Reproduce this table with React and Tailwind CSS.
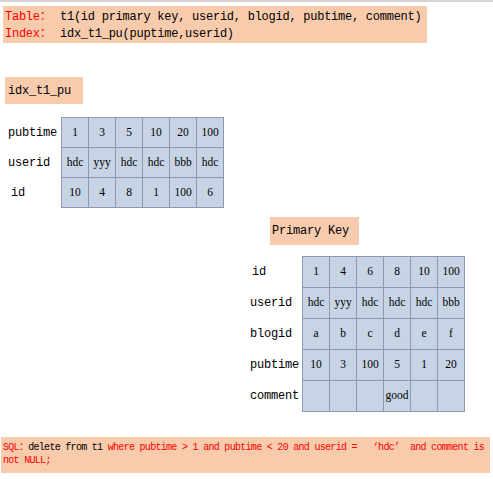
import React from "react";

const mono = { fontFamily: '"Liberation Mono", "Noto Sans CJK SC", monospace' };

function Grid({ rows, labels, labelW, labelPads, cellH }) {
  return (
    <div className="flex">
      <div className="flex flex-col pt-px" style={{ width: labelW }}>
        {labels.map((l, i) => (
          <div
            key={i}
            className={`flex items-center text-[12px] tracking-[-0.2px] text-black ${labelPads[i]} ${cellH}`}
            style={{ ...mono, marginBottom: 1 }}
          >
            {l}
          </div>
        ))}
      </div>
      <div className="grid grid-cols-[repeat(6,26px)] gap-px bg-[#8b9ab0] border border-[#8b9ab0]">
        {rows.flat().map((c, i) => (
          <div
            key={i}
            className={`bg-[#c7d4e5] flex items-center justify-center text-[11.5px] text-black ${cellH}`}
            style={{ fontFamily: '"Liberation Serif", serif' }}
          >
            {c}
          </div>
        ))}
      </div>
    </div>
  );
}

export default function App() {
  return (
    <div className="w-[493px] h-[479px] bg-white border-t-2 border-[#d4d4d4] overflow-hidden" style={mono}>
      <div className="ml-[3px] mt-[4px] w-[424px] h-[37px] bg-[#f8cbad] pl-[2px] pt-[3px] text-[12px] leading-[17px] tracking-[-0.25px] text-black">
        <div className="flex whitespace-nowrap">
          <span className="w-[55px] text-[#ff0000]">Table：</span>
          <span>t1(id primary key, userid, blogid, pubtime, comment)</span>
        </div>
        <div className="flex whitespace-nowrap">
          <span className="w-[55px] text-[#ff0000]">Index：</span>
          <span>idx_t1_pu(puptime,userid)</span>
        </div>
      </div>

      <div className="ml-[5px] mt-[34px] w-[78px] h-[27px] bg-[#f8cbad] flex items-center pl-[3px] text-[12px] tracking-[-0.2px] text-black">
        idx_t1_pu
      </div>

      <div className="mt-[13px]">
        <Grid
          labelW={61}
          labels={["pubtime", "userid", "id"]}
          labelPads={["pl-[8px]", "pl-[8px]", "pl-[11px]"]}
          cellH="h-[29px]"
          rows={[
            ["1", "3", "5", "10", "20", "100"],
            ["hdc", "yyy", "hdc", "hdc", "bbb", "hdc"],
            ["10", "4", "8", "1", "100", "6"],
          ]}
        />
      </div>

      <div className="ml-[270px] mt-[9px] w-[89px] h-[28px] bg-[#f8cbad] flex items-center pl-[2px] text-[12px] tracking-[-0.2px] text-black">
        Primary Key
      </div>

      <div className="mt-[11px] ml-[250px]">
        <Grid
          labelW={52}
          labels={["id", "userid", "blogid", "pubtime", "comment"]}
          labelPads={["pl-[2px]", "", "", "", ""]}
          cellH="h-[30px]"
          rows={[
            ["1", "4", "6", "8", "10", "100"],
            ["hdc", "yyy", "hdc", "hdc", "hdc", "bbb"],
            ["a", "b", "c", "d", "e", "f"],
            ["10", "3", "100", "5", "1", "20"],
            ["", "", "", "good", "", ""],
          ]}
        />
      </div>

      <div className="ml-[1px] mt-[25px] w-[489px] h-[36px] bg-[#f8cbad] pl-[2px] pt-[4px] text-[10px] leading-[13px] tracking-[-0.7px] text-[#ff0000] whitespace-pre">
        <div>
          SQL：<span className="text-black">delete from t1</span>
          {" where pubtime > 1 and pubtime < 20 and userid =  "}
          <span className="inline-block w-[10.6px] text-right">‘</span>hdc<span className="inline-block w-[10.6px] text-left">’</span>
          {" and comment is"}
        </div>
        <div>not NULL;</div>
      </div>
    </div>
  );
}
